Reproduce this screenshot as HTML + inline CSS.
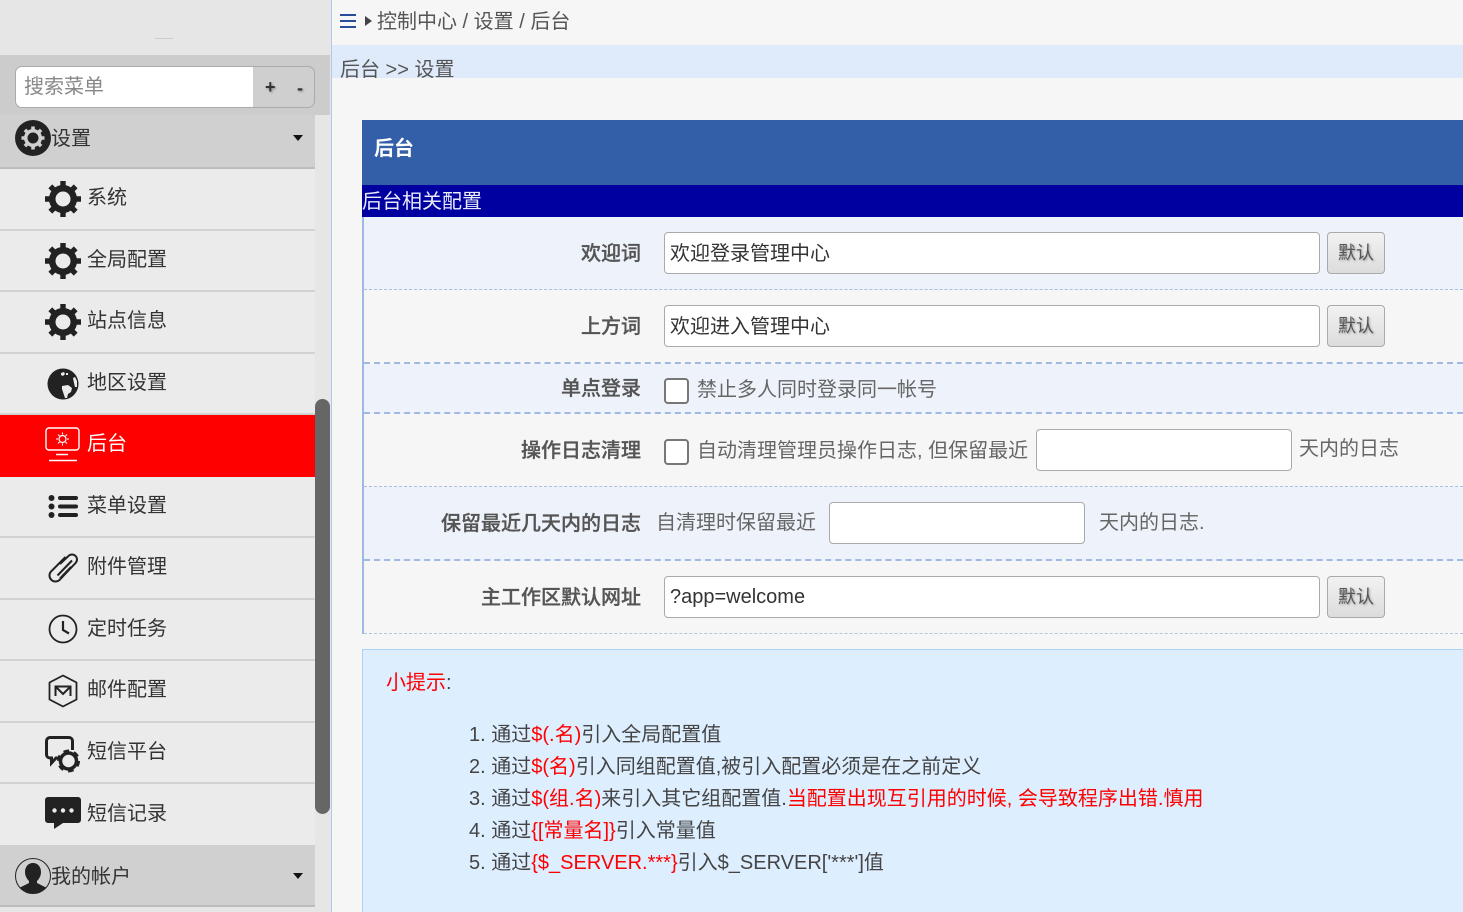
<!DOCTYPE html>
<html><head><meta charset="utf-8">
<style>
*{box-sizing:border-box}
html,body{margin:0;padding:0;width:1463px;height:912px;overflow:hidden;background:#f6f6f6;font-family:"Liberation Sans","Noto Sans CJK SC",sans-serif;font-size:20px;color:#555}
.a{position:absolute}
.t{position:absolute;white-space:nowrap;line-height:30px;height:30px;transform:translateY(1px)}
.m{position:absolute;left:0;width:315px;background:#ebebeb;border-bottom:2px solid #d2d2d2}
.m .t{left:87px;top:14px;color:#333}
.m svg{position:absolute}
.h{background:#d0d0d0;border-bottom:2px solid #bdbdbd}
.r{position:absolute;left:364px;width:1099px}
.l{position:absolute;right:822px;white-space:nowrap;line-height:30px;color:#555;font-weight:500;-webkit-text-stroke:.3px #555;transform:translateY(1px)}
.i{position:absolute;background:#fff;border:1px solid #aaa;border-radius:4px;height:42px}
.b{position:absolute;left:1327px;width:58px;height:42px;border:1px solid #aaa;border-radius:4px;background:linear-gradient(#f2f2f2,#dcdcdc);text-align:center;line-height:41px;font-size:18px;color:#555;text-shadow:1px 1px 2px #999}
.c{position:absolute;left:664px;width:25px;height:26px;background:#fff;border:2px solid #777;border-radius:4px}
.red{color:#f00}
.li{position:absolute;left:469px;white-space:nowrap;line-height:32px;color:#444;transform:translateY(1px)}
</style></head><body>
<svg width="0" height="0" style="position:absolute"><defs>
<g id="gear"><circle cx="18" cy="18" r="10.5" fill="none" stroke="#222" stroke-width="7"/><g stroke="#222" stroke-width="5.4"><path d="M18 0V36M0 18H36M5.3 5.3L30.7 30.7M30.7 5.3L5.3 30.7"/></g><circle cx="18" cy="18" r="7.5" fill="#ebebeb"/></g>
</defs></svg>

<!-- sidebar -->
<div class="a" style="left:0;top:0;width:331px;height:912px;background:#e6e6e6"></div>
<div class="a" style="left:331px;top:0;width:1px;height:912px;background:#b4c8ec"></div>
<div class="a" style="left:0;top:55px;width:330px;height:60px;background:#cccccc"></div>
<div class="a" style="left:155px;top:38px;width:18px;height:1px;background:#ccc"></div>
<div class="a" style="left:15px;top:66px;width:300px;height:42px;background:#cfcfcf;border:1px solid #aaa;border-radius:7px;overflow:hidden">
  <div class="a" style="left:0;top:0;width:237px;height:40px;background:#fff"></div>
  <div class="t" style="left:8px;top:4px;color:#888">搜索菜单</div>
  <div class="t" style="left:249px;top:4px;font-size:18px;font-weight:bold;color:#333;text-shadow:1px 1px 2px #888">+</div>
  <div class="t" style="left:281px;top:5px;font-size:18px;font-weight:bold;color:#333;text-shadow:1px 1px 2px #888">-</div>
</div>

<div class="m h" style="top:115px;height:54px">
  <svg style="left:15px;top:5px" width="36" height="36" viewBox="0 0 36 36"><circle cx="18" cy="18" r="18" fill="#222"/><g stroke="#d0d0d0" stroke-width="3.6"><path d="M18 6.500V29.500M6.500 18H29.500M9.900 9.900L26.100 26.100M26.100 9.900L9.900 26.100"/></g><circle cx="18" cy="18" r="9" fill="#d0d0d0"/><circle cx="18" cy="18" r="5.500" fill="#222"/></svg>
  <div class="t" style="left:51px;top:8px">设置</div>
  <div class="a" style="left:293px;top:20px;width:0;height:0;border:5px solid transparent;border-top:6px solid #111;border-bottom:0"></div>
</div>
<div class="m" style="top:169px;height:62px"><svg style="left:45px;top:12px" width="36" height="36"><use href="#gear"/></svg><div class="t" style="top:13px">系统</div></div>
<div class="m" style="top:231px;height:61px"><svg style="left:45px;top:12px" width="36" height="36"><use href="#gear"/></svg><div class="t" style="top:13px">全局配置</div></div>
<div class="m" style="top:292px;height:62px"><svg style="left:45px;top:12px" width="36" height="36"><use href="#gear"/></svg><div class="t" style="top:13px">站点信息</div></div>
<div class="m" style="top:354px;height:61px">
  <svg style="left:47px;top:14px" width="32" height="32" viewBox="0 0 32 32"><circle cx="16" cy="16" r="15.500" fill="#222"/><path d="M14 5l3-1 1 2-2 2-2-1zM19 5l2 0 0 2-2 0zM15 18l6-1 4 3-1 4-3 2-1 4-2 0-2-6-1-3zM26 10l2-1 2 4 0 6-2 0-1-4z" fill="#ebebeb"/></svg>
  <div class="t" style="top:13px">地区设置</div>
</div>
<div class="m" style="top:415px;height:62px;background:#f00;border:0">
  <svg style="left:45px;top:12px" width="36" height="36" viewBox="0 0 36 36" fill="none" stroke="#fff"><rect x="1" y="1" width="33" height="22" rx="3" stroke-width="1.400"/><circle cx="17.500" cy="12" r="3.500" stroke-width="1.200"/><path d="M17.500 5.500v2M17.500 16.500v2M11 12h2M22 12h2M13 7.500l1.500 1.500M20.500 15l1.500 1.500M22 7.500L20.500 9M14.500 15L13 16.500" stroke-width="1.100"/><path d="M11 27.500h12M4 33.500h28" stroke-width="1.400"/></svg>
  <div class="t" style="top:13px;color:#fff">后台</div>
</div>
<div class="m" style="top:477px;height:61px">
  <svg style="left:47px;top:15px" width="32" height="30" viewBox="0 0 32 30"><g fill="#222"><circle cx="4.500" cy="6" r="3"/><circle cx="4.500" cy="14.500" r="3"/><circle cx="4.500" cy="23" r="3"/><rect x="11" y="4" width="20" height="4" rx="2"/><rect x="11" y="12.500" width="20" height="4" rx="2"/><rect x="11" y="21" width="20" height="4" rx="2"/></g></svg>
  <div class="t" style="top:13px">菜单设置</div>
</div>
<div class="m" style="top:538px;height:62px">
  <svg style="left:48px;top:13px" width="30" height="34" viewBox="0 0 30 34" fill="none" stroke="#222" stroke-width="2"><path d="M12 13L21 4.500a5 5 0 0 1 7 7L12 28.500a6 6 0 0 1-9-8L17.500 6M24 9.500L9.500 24.500"/><path d="M12 27.500L23 16" /></svg>
  <div class="t" style="top:13px">附件管理</div>
</div>
<div class="m" style="top:600px;height:61px">
  <svg style="left:48px;top:14px" width="30" height="30" viewBox="0 0 30 30" fill="none" stroke="#222"><circle cx="15" cy="15" r="13.500" stroke-width="1.800"/><path d="M15 7v9l6 3.500" stroke-width="2.200"/></svg>
  <div class="t" style="top:13px">定时任务</div>
</div>
<div class="m" style="top:661px;height:62px">
  <svg style="left:48px;top:13px" width="30" height="34" viewBox="0 0 30 34" fill="none" stroke="#222" stroke-width="1.800"><path d="M15 1.500L28.500 8.500V25.500L15 32.500 1.500 25.500V8.500Z" stroke-linejoin="round"/><path d="M7.500 22V12.500H22.500V22M8 13l7 7 7-7" stroke-width="2"/></svg>
  <div class="t" style="top:13px">邮件配置</div>
</div>
<div class="m" style="top:723px;height:61px">
  <svg style="left:45px;top:12px" width="36" height="38" viewBox="0 0 36 38" fill="none"><path d="M14 23H11L6.500 28V23H5A3.500 3.500 0 0 1 1.500 19.500V6A3.500 3.500 0 0 1 5 2.500H24A3.500 3.500 0 0 1 27.500 6V15" stroke="#222" stroke-width="3"/><circle cx="23.500" cy="26" r="8" stroke="#222" stroke-width="3.500"/><circle cx="23.500" cy="26" r="10" stroke="#222" stroke-width="3" stroke-dasharray="5.500 4.970"/></svg>
  <div class="t" style="top:13px">短信平台</div>
</div>
<div class="m" style="top:784px;height:61px;border:0">
  <svg style="left:45px;top:13px" width="36" height="34" viewBox="0 0 36 34"><path d="M3 0H33a3 3 0 0 1 3 3V23a3 3 0 0 1-3 3H18L9 32V26H3a3 3 0 0 1-3-3V3A3 3 0 0 1 3 0Z" fill="#222"/><circle cx="9.500" cy="13.500" r="2.200" fill="#ebebeb"/><circle cx="18" cy="13.500" r="2.200" fill="#ebebeb"/><circle cx="26.500" cy="13.500" r="2.200" fill="#ebebeb"/></svg>
  <div class="t" style="top:14px">短信记录</div>
</div>
<div class="m h" style="top:845px;height:62px">
  <svg style="left:15px;top:13px" width="36" height="36" viewBox="0 0 36 36"><circle cx="18" cy="18" r="17.500" fill="none" stroke="#222" stroke-width="1"/><path d="M18 5c5 0 8 4 8 9 0 4-2 7-4 9v2l9 4.500A17 17 0 0 1 18 35.500 17 17 0 0 1 5 29.500L14 25v-2c-2-2-4-5-4-9 0-5 3-9 8-9Z" fill="#222"/></svg>
  <div class="t" style="left:51px;top:16px">我的帐户</div>
  <div class="a" style="left:293px;top:28px;width:0;height:0;border:5px solid transparent;border-top:6px solid #111;border-bottom:0"></div>
</div>
<div class="a" style="left:315px;top:399px;width:15px;height:415px;background:#666;border-radius:8px"></div>

<!-- top -->
<svg class="a" style="left:340px;top:14px" width="16" height="14"><path d="M0 1H16M0 7H16M0 13H16" stroke="#2a4a9c" stroke-width="2"/></svg>
<div class="a" style="left:365px;top:16px;width:0;height:0;border:5.500px solid transparent;border-left:7px solid #444;border-right:0"></div>
<div class="t" style="left:377px;top:6px">控制中心 / 设置 / 后台</div>
<div class="a" style="left:332px;top:45px;width:1131px;height:33px;background:#dfeafa;overflow:hidden">
  <div class="t" style="left:8px;top:9px">后台 &gt;&gt; 设置</div>
</div>

<!-- panel -->
<div class="a" style="left:362px;top:120px;width:1101px;height:65px;background:#335ea8"></div>
<div class="t" style="left:374px;top:133px;color:#fff;font-weight:bold">后台</div>
<div class="a" style="left:362px;top:185px;width:1101px;height:32px;background:#0000a0"></div>
<div class="t" style="left:362px;top:186px;color:#e8ecf8">后台相关配置</div>
<div class="a" style="left:362px;top:217px;width:2px;height:417px;background:#a0b9e3"></div>

<div class="r" style="top:217px;height:73px;background:#eef3fb;border-bottom:1px dashed #a9bfe6"></div>
<div class="r" style="top:290px;height:74px;background:#f6f6f6;border-bottom:2px dashed #a0b9e3"></div>
<div class="r" style="top:364px;height:50px;background:#eef3fb;border-bottom:2px dashed #a0b9e3"></div>
<div class="r" style="top:414px;height:73px;background:#f6f6f6;border-bottom:1px dashed #a9bfe6"></div>
<div class="r" style="top:487px;height:74px;background:#eef3fb;border-bottom:2px dashed #a0b9e3"></div>
<div class="r" style="top:561px;height:73px;background:#f6f6f6;border-bottom:1px dashed #b5c5e0"></div>

<div class="l" style="top:238px">欢迎词</div>
<div class="i" style="left:664px;top:232px;width:656px"></div>
<div class="t" style="left:670px;top:238px;color:#333">欢迎登录管理中心</div>
<div class="b" style="top:232px">默认</div>

<div class="l" style="top:311px">上方词</div>
<div class="i" style="left:664px;top:305px;width:656px"></div>
<div class="t" style="left:670px;top:311px;color:#333">欢迎进入管理中心</div>
<div class="b" style="top:305px">默认</div>

<div class="l" style="top:373px">单点登录</div>
<div class="c" style="top:378px"></div>
<div class="t" style="left:697px;top:374px;color:#666">禁止多人同时登录同一帐号</div>

<div class="l" style="top:435px">操作日志清理</div>
<div class="c" style="top:439px"></div>
<div class="t" style="left:697px;top:435px;color:#666">自动清理管理员操作日志, 但保留最近</div>
<div class="i" style="left:1036px;top:429px;width:256px"></div>
<div class="t" style="left:1299px;top:433px;color:#666">天内的日志</div>

<div class="l" style="top:508px">保留最近几天内的日志</div>
<div class="t" style="left:656px;top:507px;color:#666">自清理时保留最近</div>
<div class="i" style="left:829px;top:502px;width:256px"></div>
<div class="t" style="left:1099px;top:507px;color:#666">天内的日志.</div>

<div class="l" style="top:582px">主工作区默认网址</div>
<div class="i" style="left:664px;top:576px;width:656px"></div>
<div class="t" style="left:670px;top:581px;color:#333">?app=welcome</div>
<div class="b" style="top:576px">默认</div>

<!-- tip -->
<div class="a" style="left:362px;top:649px;width:1101px;height:263px;background:#ddeeff;border:1px solid #aad4f5;border-bottom:0;border-right:0"></div>
<div class="t" style="left:386px;top:667px;color:#444"><span class="red">小提示</span>:</div>
<div class="li" style="top:718px">1. 通过<span class="red">$(.名)</span>引入全局配置值</div>
<div class="li" style="top:750px">2. 通过<span class="red">$(名)</span>引入同组配置值,被引入配置必须是在之前定义</div>
<div class="li" style="top:782px">3. 通过<span class="red">$(组.名)</span>来引入其它组配置值.<span class="red">当配置出现互引用的时候, 会导致程序出错.慎用</span></div>
<div class="li" style="top:814px">4. 通过<span class="red">{[常量名]}</span>引入常量值</div>
<div class="li" style="top:846px">5. 通过<span class="red">{$_SERVER.***}</span>引入$_SERVER['***']值</div>
</body></html>
